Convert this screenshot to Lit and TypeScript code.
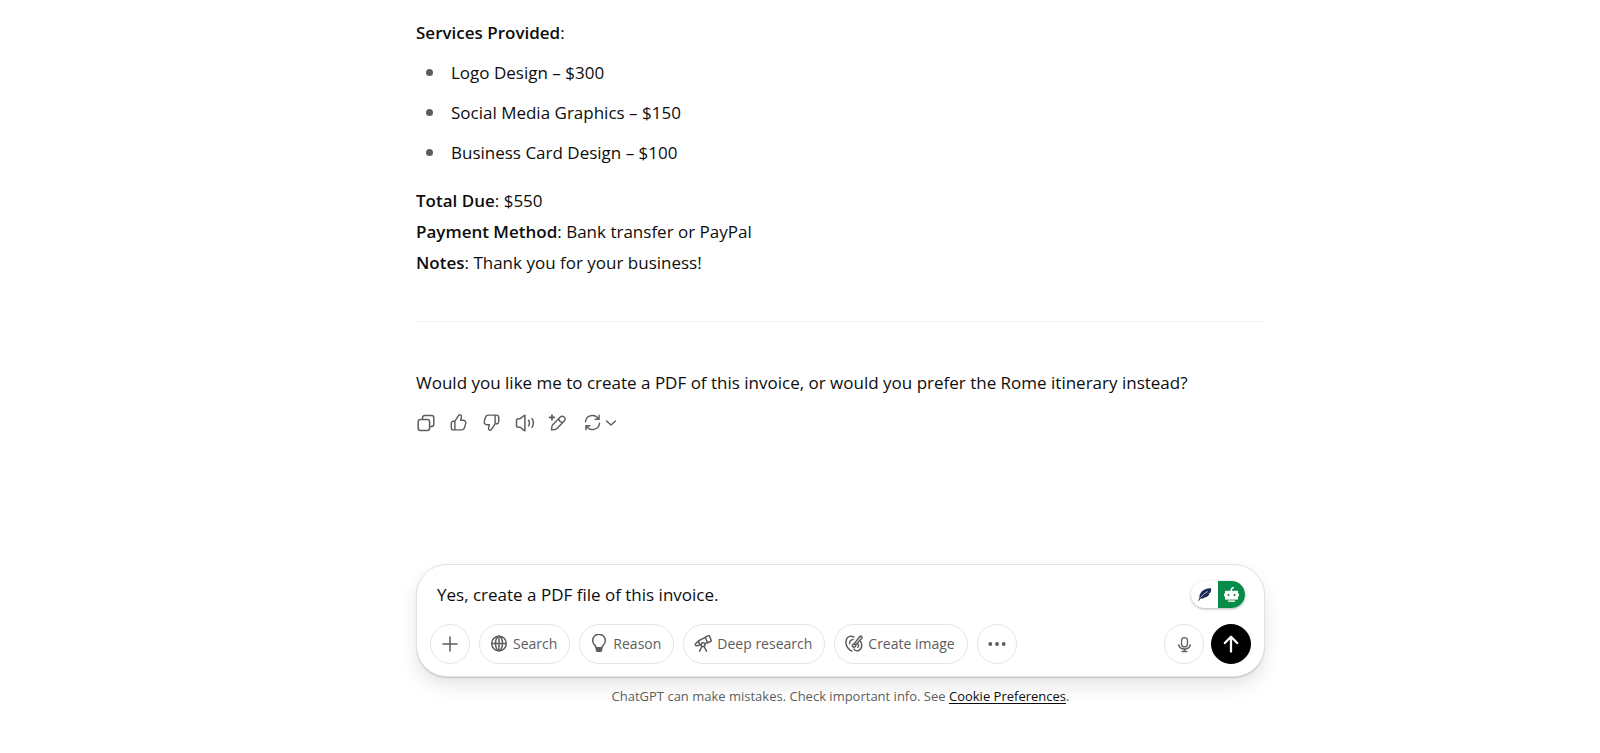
import { LitElement, html, css, svg } from "lit";
import { customElement, state } from "lit/decorators.js";

const icon = (body: unknown, size = 20) => html`<svg
  class="icon"
  width=${size}
  height=${size}
  viewBox="0 0 20 20"
  fill="none"
  stroke="currentColor"
  stroke-width="1.5"
  stroke-linecap="round"
  stroke-linejoin="round"
  aria-hidden="true"
>${body}</svg>`;

const copy = svg`<rect x="2.2" y="6.4" width="11.4" height="11" rx="2.2"/><path d="M6.6 6.2V4.8a2.2 2.2 0 0 1 2.2-2.2h6.800a2.200 2.200 0 0 1 2.200 2.200v6.400a2.200 2.200 0 0 1-2.200 2.200h-1.800"/>`;
const thumb = svg`<path d="M6.2 8.6 9.8 3c.5-.9 1.4-1.3 2.2-1 1 .3 1.3 1.3 1.1 2.2L12.200 7.700h2.700c1.900 0 3.200 1.400 2.700 3.200l-1.200 4.300c-.4 1.700-1.500 2.600-3.300 2.600H4.800a2.400 2.400 0 0 1-2.400-2.400V11a2.400 2.400 0 0 1 2.400-2.400h1.400ZM6.200 8.600v9.200"/>`;
const thumbDown = svg`<g transform="rotate(180 10 10)">${thumb}</g>`;
const speaker = svg`<path d="M9.900 2.200v15.600c-2.200-.6-3.200-3.600-5.200-3.600H3.200a1.700 1.700 0 0 1-1.700-1.700v-5a1.700 1.700 0 0 1 1.700-1.700h1.500c2 0 3-3 5.200-3.600Z"/><path d="M13.600 7.200c1 1.700 1 3.900 0 5.600M17 5.600c1.700 2.700 1.700 6.100 0 8.800"/>`;
const editStar = svg`<path d="M17 4.200c-1.200-1.200-3-1.100-4.100.1l-7.700 7.800c-.7.700-1 1.300-1.100 2.200l-.5 3.500 3.600-.5c.9-.1 1.500-.4 2.200-1.100l7.700-7.800c1.100-1.200 1.100-3-.1-4.200ZM11.200 6.100c.4 1.900 1.800 3.300 3.800 3.800"/><path d="M4.200 2.200v5M1.700 4.700h5" stroke-width="1.900"/>`;
const refresh = svg`<path d="M2.600 9.200a7.400 7.400 0 0 1 13.700-3M16.900 2.400v4.200h-4.200M17.400 10.800a7.400 7.400 0 0 1-13.700 3M3.100 17.600v-4.200h4.200"/>`;
const chevron = svg`<path d="m2.500 6.500 7.500 7 7.500-7" stroke-width="2.300"/>`;
const plus = svg`<path d="M10 3v14M3 10h14"/>`;
const globe = svg`<circle cx="10" cy="9.500" r="7.300"/><ellipse cx="10" cy="9.500" rx="3.500" ry="7.300"/><path d="M2.700 9.500h14.600M10 2.200v14.600"/>`;
const bulb = svg`<path d="M7.100 13.700c-.2-1.200-.7-1.900-1.600-2.800a6.300 6.300 0 1 1 9 0c-.9.900-1.400 1.600-1.600 2.800Z"/><path fill="currentColor" d="M7.200 13.700h5.600l-.3 2.400a1.400 1.400 0 0 1-1.400 1.200H8.900a1.400 1.400 0 0 1-1.400-1.200Z"/>`;
const telescope = svg`<path d="m12.300 3.200 3-1.500c.5-.3 1-.1 1.200.4l1.700 4.200c.2.500 0 1-.5 1.200l-3.200 1.300Z"/><path d="m12.300 3.300-7 3.700M14.500 8.800l-2.500.8M8.200 10.500l-3.900 1.200c-.8.200-1.600 0-1.900-.7-.3-.7 0-1.500.8-1.900L5.300 7l1.500 3.900"/><circle cx="10" cy="10.700" r="1.900"/><path d="m8.900 12.500-2.300 4.700M11.100 12.500l2.400 4.700"/>`;
const brush = svg`<path d="M9.800 3C7 1.500 3.900 2.200 2.600 5c-1.700 3.700-.2 8.800 3.400 11.100l1.900.9M5.600 9.700a3.900 3.900 0 0 1 3.600-4.300"/><path d="m10.100 9.900 5.500-7.100c.6-.7 1.400-.8 2-.3.600.6.600 1.400-.1 2.100l-5.900 6.300"/><path d="M11.600 10.800c-.7-1.100-2.400-1.100-3 0-.6 1.200.2 2.500 1.500 2.400 1.200 0 1.800-1.200 1.500-2.400ZM16.400 7.400c1.700 2.600 1.600 5.800-.1 7.900-2 2.500-5.500 1.700-6.300-.3"/><path d="M13.600 9.700c1.300 1.100 1.300 2.500.2 3.500"/>`;
const dots = svg`<g fill="currentColor" stroke="none"><circle cx="3.300" cy="10" r="1.900"/><circle cx="10" cy="10" r="1.900"/><circle cx="16.700" cy="10" r="1.900"/></g>`;
const mic = svg`<rect x="6.500" y="1.800" width="7" height="11" rx="3.500"/><path d="M3.200 10.400c.6 3 3.400 4.900 6.800 4.900s6.200-1.900 6.800-4.900M10 15.400V18.200M7.300 18.300h5.400" stroke-width="1.700"/>`;
const arrow = svg`<path d="M10 17.500V3M3.800 9 10 2.800 16.200 9" stroke-width="2.300"/>`;
const feather = svg`<path fill="#1b2b55" stroke="none" d="M3 18.200c-.3-1.700.2-3 1.200-4.400-1-4.300 2.500-8.400 7.400-10.400 2.300-.9 4.600-1 6.200-.5.300 2.200-.2 3.800-1.200 5.400l-2.100.6 1.500.6c-1.100 1.900-2.600 3-4.400 3.700l-2.300-.1 1.100.6c-1.600.9-3.300 1.300-5 1.100-.9 1-1.500 2-2.400 3.400Z"/><path stroke="#fff" stroke-width=".8" d="M5.900 13c1.900-2.600 4.300-4.600 7.600-6.300"/>`;
const robot = svg`<g stroke="none" fill="#fff"><rect x="2.400" y="5.600" width="15.200" height="10.400"/><rect x="1.200" y="8.800" width="17.600" height="3.600"/><rect x="5.800" y="17" width="8.400" height="1.600"/><path d="M8.700 5.800c-.1-2.700 1-4.300 3.800-5l.6 1.600c-1.900.5-2.500 1.400-2.400 3.400Z"/><g fill="#078b49"><rect x="5.400" y="9.400" width="2" height="2.200"/><rect x="12.600" y="9.400" width="2" height="2.200"/></g></g>`;

@customElement("app-root")
export class AppRoot extends LitElement {
  @state() private draft = "Yes, create a PDF file of this invoice.";

  static styles = css`
    :host {
      display: flex;
      flex-direction: column;
      box-sizing: border-box;
      min-height: 100vh;
      padding: 17px 40px 47px 121px;
      background: #fff;
      color: #0d0d0d;
      font: 17px/31px "Open Sans", "Noto Sans", sans-serif;
    }
    * { box-sizing: border-box; }
    .column {
      width: 100%;
      max-width: 849px;
      margin-inline: auto;
    }
    p, ul { margin: 0; padding: 0; }
    strong { font-weight: 600; }
    ul {
      margin: 9px 0 17px;
      padding-left: 10px;
      display: grid;
      gap: 9px;
      list-style: none;
    }
    li {
      display: flex;
      align-items: center;
      gap: 18px;
    }
    li::before {
      content: "";
      width: 7px;
      height: 7px;
      border-radius: 50%;
      background: #5d5d5d;
    }
    hr {
      margin: 43px 0 45px;
      border: 0;
      border-top: 1px solid #f0f0f0;
    }
    button {
      display: inline-flex;
      align-items: center;
      justify-content: center;
      margin: 0;
      padding: 0;
      border: 0;
      background: none;
      color: #5d5d5d;
      font: inherit;
      cursor: pointer;
    }
    .icon { flex: none; display: block; }
    .actions {
      display: flex;
      margin: 8px 0 0 -7px;
    }
    .actions button {
      width: 33px;
      height: 33px;
    }
    .actions .wide {
      width: 51px;
      gap: 3px;
    }
    .composer {
      margin-top: auto;
      padding: 14px 13px 12px;
      border: 1px solid #e2e2e2;
      border-radius: 31px;
      background: #fff;
      box-shadow: 0 9px 18px rgba(0, 0, 0, 0.1), 0 1px 1px rgba(0, 0, 0, 0.16);
    }
    .entry {
      display: flex;
      align-items: center;
      padding: 0 6px 0 7px;
    }
    .entry input {
      flex: 1;
      min-width: 0;
      height: 31px;
      padding: 0;
      border: 0;
      outline: 0;
      background: none;
      color: inherit;
      font: inherit;
    }
    .assist {
      display: flex;
      overflow: hidden;
      border-radius: 14px;
      box-shadow: 0 1px 3px rgba(0, 0, 0, 0.3);
    }
    .assist button {
      width: 27px;
      height: 27px;
    }
    .assist .bot { background: #078b49; }
    .tools {
      display: flex;
      align-items: center;
      gap: 9px;
      margin-top: 14px;
    }
    .tools button {
      height: 40px;
      min-width: 40px;
      border: 1px solid #e5e5e5;
      border-radius: 20px;
      font-size: 14px;
      font-weight: 500;
      line-height: 20px;
      white-space: nowrap;
    }
    .tools .pill {
      gap: 4px;
      padding: 0 12px 0 9px;
    }
    .finish {
      display: flex;
      gap: 7px;
      margin-left: auto;
    }
    .tools .send {
      border-color: #000;
      background: #000;
      color: #fff;
    }
    .note {
      margin-top: 9px;
      color: #5d5d5d;
      font-size: 13px;
      line-height: 20px;
      text-align: center;
    }
    .note a {
      color: #0d0d0d;
      text-underline-offset: 2px;
    }
  `;

  private pill(label: string, art: unknown) {
    return html`<button type="button" class="pill">${icon(art)}<span>${label}</span></button>`;
  }

  render() {
    return html`
      <main class="column">
        <p><strong>Services Provided</strong>:</p>
        <ul>
          <li>Logo Design – $300</li>
          <li>Social Media Graphics – $150</li>
          <li>Business Card Design – $100</li>
        </ul>
        <p>
          <strong>Total Due</strong>: $550<br />
          <strong>Payment Method</strong>: Bank transfer or PayPal<br />
          <strong>Notes</strong>: Thank you for your business!
        </p>
        <hr />
        <p>Would you like me to create a PDF of this invoice, or would you prefer the Rome itinerary instead?</p>
        <div class="actions">
          <button aria-label="Copy">${icon(copy)}</button>
          <button aria-label="Good response">${icon(thumb, 19)}</button>
          <button aria-label="Bad response">${icon(thumbDown, 19)}</button>
          <button aria-label="Read aloud">${icon(speaker)}</button>
          <button aria-label="Edit in canvas">${icon(editStar, 19)}</button>
          <button class="wide" aria-label="Try again">${icon(refresh, 19)}${icon(chevron, 12)}</button>
        </div>
      </main>
      <form class="column composer" @submit=${(e: Event) => e.preventDefault()}>
        <div class="entry">
          <input
            type="text"
            aria-label="Message"
            .value=${this.draft}
            @input=${(e: Event) => (this.draft = (e.target as HTMLInputElement).value)}
          />
          <div class="assist">
            <button type="button" aria-label="Writing assistant">${icon(feather, 17)}</button>
            <button type="button" class="bot" aria-label="Chat assistant">${icon(robot, 17)}</button>
          </div>
        </div>
        <div class="tools">
          <button type="button" aria-label="Add">${icon(plus)}</button>
          ${this.pill("Search", globe)}
          ${this.pill("Reason", bulb)}
          ${this.pill("Deep research", telescope)}
          ${this.pill("Create image", brush)}
          <button type="button" aria-label="More">${icon(dots)}</button>
          <div class="finish">
            <button type="button" aria-label="Dictate">${icon(mic, 17)}</button>
            <button type="submit" class="send" aria-label="Send">${icon(arrow)}</button>
          </div>
        </div>
      </form>
      <p class="column note">
        ChatGPT can make mistakes. Check important info. See <a href="#">Cookie Preferences</a>.
      </p>
    `;
  }
}
